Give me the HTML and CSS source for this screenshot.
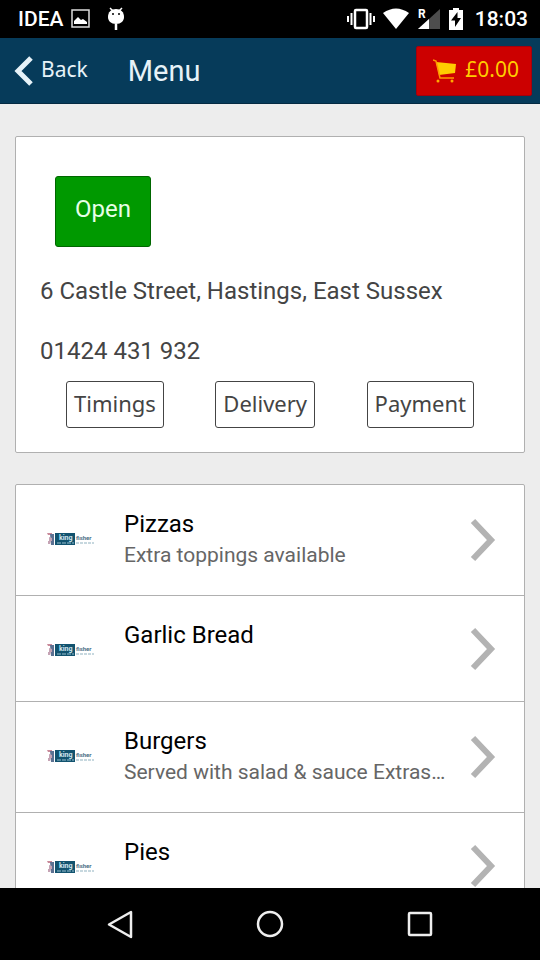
FILE: index.html
```
<!DOCTYPE html>
<html lang="en">
<head>
    <meta charset="UTF-8">
    <meta name="viewport" content="width=device-width, initial-scale=1.0">
    <title>Menu</title>
    <link rel="stylesheet" href="styles.css">
</head>
<body>
    <!-- Shared icons -->
    <svg class="sprite" aria-hidden="true">
        <symbol id="chevron" viewBox="0 0 26 44">
            <path d="M3 3L21 22L3 41" fill="none" stroke="#b3b3b3" stroke-width="6"/>
        </symbol>
        <symbol id="logo" viewBox="0 0 50 16">
            <path d="M1 2h5v2H2z" fill="#c98a9a"/>
            <path d="M4 3h4v11H5z" fill="#5c7192"/>
            <path d="M3 6l3 1v3H3zM2 10h3l-1 3H2z" fill="#c5a3b4"/>
            <rect x="9" y="2" width="20" height="12" fill="#12536f"/>
            <path d="M11 12h17" stroke="#6c9cb0" stroke-width="1.5" stroke-dasharray="4 1"/>
            <path d="M30 12h18" stroke="#b5cbd5" stroke-width="1.5" stroke-dasharray="3 1"/>
        </symbol>
    </svg>

    <!-- Status Bar -->
    <div class="status-bar">
        <span>IDEA</span>
        <svg class="icon-picture" width="20" height="20" viewBox="0 0 20 20">
            <rect x="1" y="1" width="17" height="17" fill="none" stroke="#ddd" stroke-width="1.5"/>
            <path d="M3 15v-3l4-4 3 3 2-1 4 3v2z" fill="#fff"/>
        </svg>
        <svg width="18" height="26" viewBox="0 0 18 26">
            <path d="M3 2l3 3M15 2l-3 3" stroke="#fff" stroke-width="1.5"/>
            <path d="M9 3C4 3 1 6 1 11c0 4 3 7 8 7s8-3 8-7c0-5-3-8-8-8z" fill="#fff"/>
            <path d="M9 18v6" stroke="#fff" stroke-width="2.5"/>
            <circle cx="6" cy="8" r="1" fill="#000"/>
            <circle cx="12" cy="8" r="1" fill="#000"/>
        </svg>
        <div class="status-right">
            <svg width="28" height="24" viewBox="0 0 28 24">
                <rect x="8" y="3" width="12" height="18" rx="1" fill="none" stroke="#fff" stroke-width="2.5"/>
                <path d="M4.500 6v12M23.500 6v12M1 9v6M27 9v6" stroke="#fff" stroke-width="2"/>
            </svg>
            <svg width="26" height="24" viewBox="0 0 26 24">
                <path d="M0 6Q13-3 26 6L13 22z" fill="#fff"/>
            </svg>
            <svg width="24" height="24" viewBox="0 0 24 24">
                <path d="M23 2v20H1z" fill="#4d4d4d"/>
                <path d="M12 12v10H1z" fill="#fff"/>
                <rect width="10" height="12" fill="#000"/>
                <text x="1" y="11" font-size="12" font-weight="700" fill="#fff">R</text>
            </svg>
            <svg width="14" height="24" viewBox="0 0 14 24">
                <path d="M4 1h6v2h4v20H0V3h4z" fill="#fff"/>
                <path d="M8.500 5v6H12l-6 9v-6.500H2z" fill="#000"/>
            </svg>
            <span>18:03</span>
        </div>
    </div>

    <!-- Header -->
    <header class="header">
        <a class="back" href="#">
            <svg width="20" height="32" viewBox="0 0 20 32">
                <path d="M17 3L4 16L17 29" fill="none" stroke="#e6f2f8" stroke-width="5"/>
            </svg>
            <span>Back</span>
        </a>
        <h1>Menu</h1>
        <button class="cart" type="button">
            <svg width="24" height="24" viewBox="0 0 24 24">
                <path d="M3 3l20 2-1 9-16 2z" fill="#fc0"/>
                <path d="M0 1l3 1 4 17h14" fill="none" stroke="#f90" stroke-width="1.5"/>
                <circle cx="5" cy="22" r="1.5" fill="#fa0"/>
                <circle cx="19" cy="22" r="1.5" fill="#fa0"/>
            </svg>
            <span>£0.00</span>
        </button>
    </header>

    <main class="content">
        <!-- Restaurant Details -->
        <section class="card details">
            <button class="open" type="button">Open</button>
            <p>6 Castle Street, Hastings, East Sussex</p>
            <p>01424 431 932</p>
            <div class="actions">
                <button type="button">Timings</button>
                <button type="button">Delivery</button>
                <button type="button">Payment</button>
            </div>
        </section>

        <!-- Menu Categories -->
        <nav class="card menu">
            <a class="menu-item" href="#">
                <svg class="logo" viewBox="0 0 50 16">
                    <use href="#logo"/>
                    <text class="logo-king" x="13" y="9">king</text>
                    <text class="logo-fisher" x="30" y="9">fisher</text>
                </svg>
                <div class="menu-text">
                    <h2>Pizzas</h2>
                    <p>Extra toppings available</p>
                </div>
                <svg class="chevron"><use href="#chevron"/></svg>
            </a>
            <a class="menu-item" href="#">
                <svg class="logo" viewBox="0 0 50 16">
                    <use href="#logo"/>
                    <text class="logo-king" x="13" y="9">king</text>
                    <text class="logo-fisher" x="30" y="9">fisher</text>
                </svg>
                <div class="menu-text">
                    <h2>Garlic Bread</h2>
                </div>
                <svg class="chevron"><use href="#chevron"/></svg>
            </a>
            <a class="menu-item" href="#">
                <svg class="logo" viewBox="0 0 50 16">
                    <use href="#logo"/>
                    <text class="logo-king" x="13" y="9">king</text>
                    <text class="logo-fisher" x="30" y="9">fisher</text>
                </svg>
                <div class="menu-text">
                    <h2>Burgers</h2>
                    <p>Served with salad &amp; sauce Extras…</p>
                </div>
                <svg class="chevron"><use href="#chevron"/></svg>
            </a>
            <a class="menu-item" href="#">
                <svg class="logo" viewBox="0 0 50 16">
                    <use href="#logo"/>
                    <text class="logo-king" x="13" y="9">king</text>
                    <text class="logo-fisher" x="30" y="9">fisher</text>
                </svg>
                <div class="menu-text">
                    <h2>Pies</h2>
                </div>
                <svg class="chevron"><use href="#chevron"/></svg>
            </a>
        </nav>
    </main>

    <!-- System Navigation -->
    <div class="system-nav">
        <button type="button" aria-label="Back">
            <svg width="30" height="30" viewBox="0 0 30 30">
                <path d="M26 3v25L4 15.500z"/>
            </svg>
        </button>
        <button type="button" aria-label="Home">
            <svg width="30" height="30" viewBox="0 0 30 30">
                <circle cx="15" cy="15" r="12"/>
            </svg>
        </button>
        <button type="button" aria-label="Recent apps">
            <svg width="30" height="30" viewBox="0 0 30 30">
                <rect x="4" y="4" width="22" height="22" rx="1"/>
            </svg>
        </button>
    </div>
</body>
</html>
```

FILE: styles.css
```
/* General Styles */
* {
    box-sizing: border-box;
}

body {
    font-family: Roboto, sans-serif;
    margin: 0;
    height: 100vh;
    display: flex;
    flex-direction: column;
    background: #ededed;
    color: #444;
}

h1,
h2,
p {
    margin: 0;
    font-weight: 400;
}

a {
    color: inherit;
    text-decoration: none;
}

button {
    cursor: pointer;
}

svg {
    display: block;
    flex-shrink: 0;
}

.sprite {
    position: absolute;
    width: 0;
    height: 0;
}

/* Status Bar */
.status-bar {
    flex: 0 0 38px;
    display: flex;
    align-items: center;
    padding: 0 12px 0 18px;
    background: #000;
    color: #fff;
    font-size: 21px;
    font-weight: 500;
}

.icon-picture {
    margin: 0 16px 0 8px;
}

.status-right {
    display: flex;
    align-items: center;
    gap: 8px;
    margin-left: auto;
}

.status-right span {
    margin-left: 4px;
}

/* Header */
.header {
    flex: 0 0 66px;
    display: flex;
    align-items: center;
    padding: 0 8px 0 14px;
    background: #063b5a;
    border-bottom: 1px solid #042a42;
    color: #e6f2f8;
}

.back {
    display: flex;
    align-items: center;
    gap: 7px;
    font-family: "Noto Sans", sans-serif;
    font-size: 21px;
}

.back span,
.cart span {
    padding-bottom: 4px;
}

.header h1 {
    margin-left: 40px;
    font-size: 29px;
}

.cart {
    display: flex;
    align-items: center;
    gap: 8px;
    height: 50px;
    margin-left: auto;
    padding: 0 12px 0 16px;
    background: #c00;
    border: 1px solid #a3000d;
    border-radius: 2px;
    color: #fc0;
    font-family: "Noto Sans", sans-serif;
    font-size: 21px;
}

/* Content */
.content {
    flex: 1;
    min-height: 0;
    overflow: hidden;
    padding: 32px 15px 0;
}

.card {
    margin-bottom: 31px;
    background: #fff;
    border: 1px solid #b0b0b0;
    border-radius: 2px;
}

.details {
    padding: 39px 0 24px;
}

.details p {
    padding-left: 24px;
    font-size: 24px;
    line-height: 60px;
}

.open {
    display: block;
    height: 71px;
    margin: 0 0 14px 39px;
    padding: 0 19px 6px;
    background: #090;
    border: 1px solid #060;
    border-radius: 3px;
    color: #e6ffe6;
    font-family: inherit;
    font-size: 24px;
}

.actions {
    display: flex;
    justify-content: space-between;
    padding: 0 50px;
}

.actions button {
    height: 47px;
    padding: 0 7px 4px;
    background: #fff;
    border: 1px solid #444;
    border-radius: 3px;
    color: #444;
    font-family: "Noto Sans", sans-serif;
    font-size: 22px;
}

/* Menu Categories */
.menu-item {
    display: flex;
    align-items: center;
    min-height: 106px;
    padding: 22px 28px 22px 30px;
    border-bottom: 1px solid #b0b0b0;
}

.logo {
    align-self: flex-start;
    width: 50px;
    height: 16px;
    margin: 24px 28px 0 0;
}

.logo-king,
.logo-fisher {
    font-size: 7px;
    font-weight: 700;
    fill: #d3e8f1;
}

.logo-fisher {
    font-size: 6px;
    fill: #4c7187;
}

.menu-text {
    flex: 1;
    align-self: flex-start;
    min-width: 0;
    padding-bottom: 4px;
}

.menu-text h2 {
    color: #000;
    font-size: 24px;
    line-height: 34px;
}

.menu-text p {
    color: #666;
    font-size: 21px;
    line-height: 28px;
}

.chevron {
    width: 26px;
    height: 44px;
}

/* System Navigation */
.system-nav {
    flex: 0 0 72px;
    display: flex;
    align-items: center;
    justify-content: center;
    gap: 120px;
    background: #000;
}

.system-nav button {
    padding: 0;
    background: none;
    border: 0;
}

.system-nav svg {
    fill: none;
    stroke: #eee;
    stroke-width: 2.5;
    stroke-linejoin: round;
}
```
